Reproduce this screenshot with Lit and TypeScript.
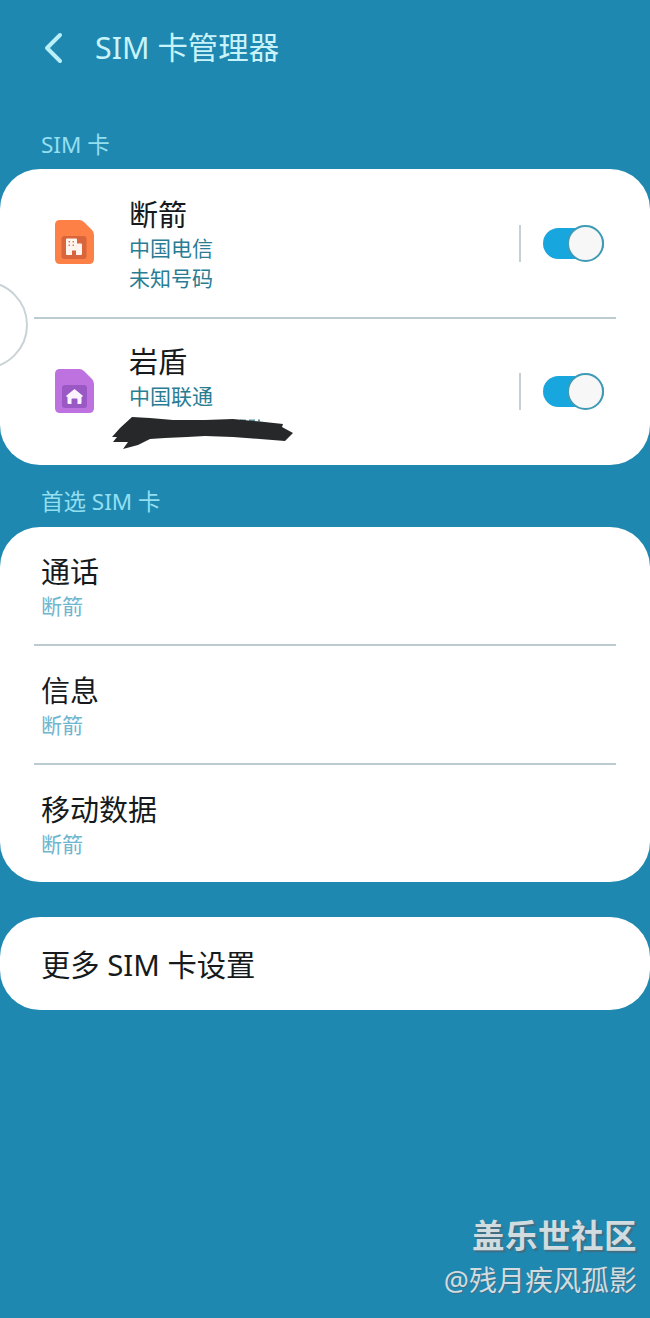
import { LitElement, html, css, svg } from "lit";
import { customElement } from "lit/decorators.js";

const simShape = "M6 1H25Q28 1 30 3L38 11Q40 13 40 16V40Q40 45 35 45H6Q1 45 1 40V6Q1 1 6 1Z";

const buildingIcon = svg`
  <svg class="sim" viewBox="0 0 41 46" width="41" height="46">
    <path d=${simShape} fill="#fd8146"/>
    <rect x="7.5" y="17" width="25" height="23" rx="3" fill="#d9653c"/>
    <path d="M12 35V20.5Q12 19.5 13 19.5H22Q23 19.5 23 20.5V24.5H27Q28 24.5 28 25.5V35Q28 36 27 36H22V31.5H18V36H13Q12 36 12 35Z" fill="#fff5ee"/>
    <path d="M14.5 22h1.5v1.5h-1.5zM18.5 22h1.5v1.5h-1.5zM14.5 25.5h1.5V27h-1.5zM18.5 25.5h1.5V27h-1.5z" fill="#d9805c"/>
  </svg>`;

const homeIcon = svg`
  <svg class="sim" viewBox="0 0 41 46" width="41" height="46">
    <path d=${simShape} fill="#bd72df"/>
    <rect x="8" y="17" width="25" height="23" rx="3" fill="#9a58c4"/>
    <path d="M20.5 21L28.5 27.6Q29.5 28.6 28 29H27.5V35Q27.5 36 26.5 36H23.5V31.5Q23.5 30.5 22.5 30.5H18.5Q17.5 30.5 17.5 31.5V36H14.5Q13.5 36 13.5 35V29H13Q11.5 28.6 12.5 27.6Z" fill="#fbf4ff"/>
  </svg>`;

@customElement("sim-toggle")
class SimToggle extends LitElement {
  static styles = css`
    :host {
      display: flex;
      align-items: center;
      gap: 22px;
    }
    .rule {
      width: 2px;
      height: 37px;
      background: #c6d0d2;
    }
    .switch {
      position: relative;
      width: 61px;
      height: 31px;
      border-radius: 16px;
      background: #18a6de;
    }
    .thumb {
      position: absolute;
      right: 0;
      top: -3px;
      box-sizing: border-box;
      width: 37px;
      height: 37px;
      border-radius: 50%;
      background: #f7f7f7;
      border: 2px solid #3f9bb5;
    }
  `;
  render() {
    return html`<div class="rule"></div><div class="switch"><div class="thumb"></div></div>`;
  }
}

@customElement("app-root")
class AppRoot extends LitElement {
  static styles = css`
    :host {
      display: block;
      position: relative;
      width: 650px;
      height: 1318px;
      overflow: hidden;
      background: #1f88b0;
      font-family: "Noto Sans", "Noto Sans CJK SC", sans-serif;
      color: #161a1c;
    }
    .header {
      display: flex;
      align-items: center;
      height: 96px;
      padding-left: 42px;
      gap: 31px;
      color: #c9f3fa;
      font-size: 30.4px;
    }
    .header span {
      margin-bottom: 4px;
    }
    .label {
      margin: 0 0 0 41px;
      height: 30px;
      line-height: 30px;
      font-size: 22.5px;
      color: #93dff0;
    }
    .label.first {
      margin-top: 34px;
      margin-bottom: 9px;
    }
    .label.second {
      margin-top: 22px;
      margin-bottom: 10px;
    }
    .card {
      background: #fff;
      border-radius: 40px;
    }
    .sim-row {
      display: flex;
      align-items: center;
      padding: 0 46px 0 54px;
    }
    .sim-row.one {
      height: 148px;
    }
    .sim-row.two {
      height: 146px;
    }
    .sim-row.two sim-toggle {
      margin-top: -2px;
    }
    .sim-text {
      flex: 1;
      margin-left: 34px;
    }
    .sim {
      display: block;
      margin-top: -2px;
    }
    .name {
      font-size: 29px;
      line-height: 36px;
      padding-top: 3px;
    }
    .two .name {
      padding-top: 1px;
      padding-bottom: 1px;
    }
    .sub {
      font-size: 21px;
      line-height: 30px;
      height: 30px;
      color: #2a7c93;
    }
    .divider {
      height: 2px;
      margin: 0 34px;
      background: #bccbcf;
    }
    .pref {
      box-sizing: border-box;
      height: 117px;
      padding: 25px 41px 0;
    }
    .pref .title {
      font-size: 29px;
      line-height: 39px;
    }
    .pref .value {
      font-size: 21px;
      line-height: 30px;
      color: #6fb6cf;
    }
    .more {
      display: flex;
      align-items: center;
      height: 93px;
      margin-top: 35px;
      padding-left: 41px;
      font-size: 29.3px;
    }
    .bubble {
      position: absolute;
      left: -60px;
      top: 281px;
      box-sizing: border-box;
      width: 88px;
      height: 88px;
      border-radius: 50%;
      background: #fff;
      border: 2px solid #c9d3d5;
    }
    .scribble {
      position: absolute;
      left: 110px;
      top: 412px;
    }
    .mark {
      position: absolute;
      right: 13px;
      top: 1214px;
      text-align: right;
      color: #d0dce0;
    }
    .mark .brand {
      font-size: 32.5px;
      line-height: 44px;
      font-weight: 700;
      letter-spacing: 0.5px;
      text-shadow: 1px 1px 0 #4a6f80, 2px 2px 1px #3c6d84;
    }
    .mark .author {
      font-size: 28px;
      line-height: 44px;
      text-shadow: 1px 1px 0 #3c6d84;
    }
  `;

  render() {
    return html`
      <div class="header">
        <svg width="22" height="32" viewBox="0 0 22 32" fill="none">
          <path d="M18 3L5 16L18 29" stroke="#b9f0f8" stroke-width="4" stroke-linecap="round" stroke-linejoin="round"/>
        </svg>
        <span>SIM 卡管理器</span>
      </div>

      <p class="label first">SIM 卡</p>
      <section class="card">
        <div class="sim-row one">
          ${buildingIcon}
          <div class="sim-text">
            <div class="name">断箭</div>
            <div class="sub">中国电信</div>
            <div class="sub">未知号码</div>
          </div>
          <sim-toggle></sim-toggle>
        </div>
        <div class="divider"></div>
        <div class="sim-row two">
          ${homeIcon}
          <div class="sim-text">
            <div class="name">岩盾</div>
            <div class="sub">中国联通</div>
            <div class="sub"></div>
          </div>
          <sim-toggle></sim-toggle>
        </div>
      </section>

      <p class="label second">首选 SIM 卡</p>
      <section class="card">
        <div class="pref"><div class="title">通话</div><div class="value">断箭</div></div>
        <div class="divider"></div>
        <div class="pref"><div class="title">信息</div><div class="value">断箭</div></div>
        <div class="divider"></div>
        <div class="pref"><div class="title">移动数据</div><div class="value">断箭</div></div>
      </section>

      <section class="card more">更多 SIM 卡设置</section>

      <div class="bubble"></div>
      <svg class="scribble" width="184" height="40" viewBox="0 0 184 40">
        <path d="M130 8.5L150 8.5" stroke="#5a93a3" stroke-width="2" stroke-dasharray="6 3"/>
        <path d="M2 25L10 16L22 5L40 6L63 8L95 8L123 7L150 9.5L173 12L172 15L183 21L175 29L150 27L123 25L95 24L77 25L55 26L40 27L28 33L13 37L18 30L14 30L3 30L7 25Z" fill="#26282a"/>
      </svg>

      <div class="mark">
        <div class="brand">盖乐世社区</div>
        <div class="author">@残月疾风孤影</div>
      </div>
    `;
  }
}
